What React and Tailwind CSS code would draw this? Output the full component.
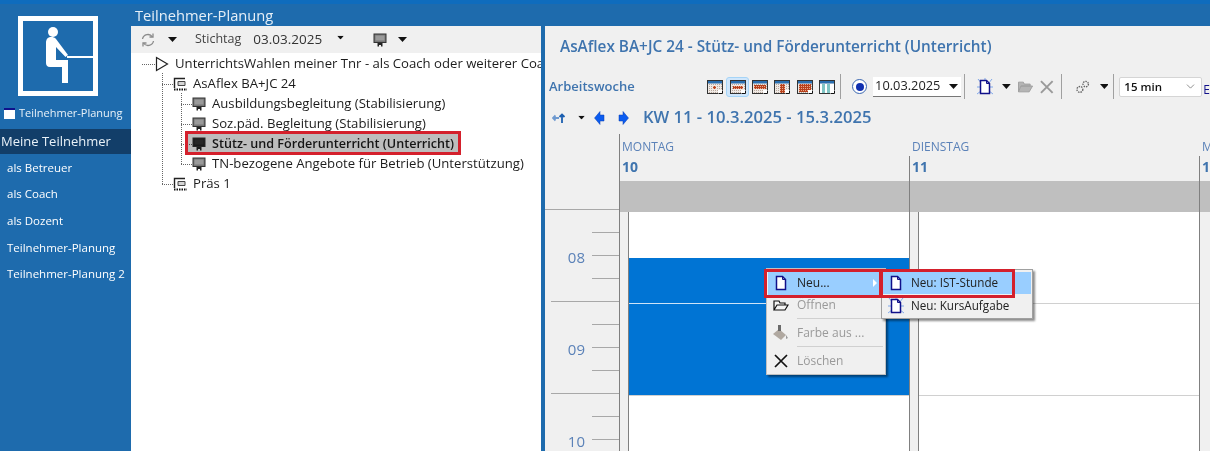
import React from 'react';
import { ChevronDown } from 'lucide-react';

const navItems = ['als Betreuer', 'als Coach', 'als Dozent', 'Teilnehmer-Planung', 'Teilnehmer-Planung 2'];

const Caret = ({ className = '' }) => (
  <svg width="9" height="5" viewBox="0 0 9 5" className={className}><path d="M0 0h9L4.5 5z" fill="#111" /></svg>
);

const Screen = ({ dark }) => (
  <svg width="14" height="14" viewBox="0 0 14 14" className="shrink-0">
    <rect x="1" y="1" width="12" height="8.5" fill={dark ? '#222' : '#777'} stroke="#333" />
    <rect x="2.5" y="2.5" width="9" height="5" fill={dark ? '#333' : '#9a9a9a'} />
    <path d="M4.5 10h5v3.5H8V12H6v1.5H4.5z" fill="#222" />
  </svg>
);

const Project = () => (
  <svg width="14" height="14" viewBox="0 0 14 14" className="shrink-0">
    <path d="M1.5 11V1.5H12" fill="none" stroke="#222" strokeWidth="1.4" />
    <path d="M5 4.5h7v4H5z" fill="#d5d5d5" stroke="#444" />
    <path d="M1 12.5h13" stroke="#111" strokeWidth="2" strokeDasharray="1.5 1" />
  </svg>
);

const TreeRow = ({ indent, dots, icon, children }) => (
  <div className="flex items-center h-5" style={{ paddingLeft: indent }}>
    <div className="border-t border-dotted border-[#666] h-0 shrink-0" style={{ width: dots }} />
    {icon}
    <span className="ml-[6px] whitespace-nowrap">{children}</span>
  </div>
);

// red blocks inside the little calendar view icons
const blocks = {
  a: [[6, 6, 3, 3]],
  b: [[3, 6, 10, 3]],
  c: [[2, 5, 12, 4]],
  d: [[6, 4, 5, 9]],
  e: [[2, 4, 12, 8]],
};

const ViewIcon = ({ kind, active }) => (
  <span className={`flex items-center justify-center w-[23px] h-[20px] rounded-[3px] ${active ? 'bg-[#cfe6fb] border border-[#a5d4f7]' : ''}`}>
    <svg width="16" height="14" viewBox="0 0 16 14">
      <defs>
        <pattern id={`dots-${kind}`} width="2" height="2" patternUnits="userSpaceOnUse">
          <rect width="2" height="2" fill="#efe9e4" />
          <rect width="1" height="1" fill="#b8a79c" />
        </pattern>
        <pattern id={`red-${kind}`} width="2" height="2" patternUnits="userSpaceOnUse">
          <rect width="2" height="2" fill="#b8411c" />
          <rect width="1" height="1" fill="#e8a98e" />
        </pattern>
      </defs>
      <rect x="0.5" y="0.5" width="15" height="13" fill={`url(#dots-${kind})`} stroke="#333" />
      <rect x="1" y="1" width="14" height="2.5" fill="#2a6fb0" />
      {kind === 'f' ? (
        <>
          <rect x="1" y="4" width="14" height="9" fill="#fff" />
          <rect x="3" y="4" width="3" height="9" fill="#7fc4c4" />
          <rect x="8" y="4" width="3" height="9" fill="#7fc4c4" />
        </>
      ) : (
        blocks[kind].map((r, i) => <rect key={i} x={r[0]} y={r[1]} width={r[2]} height={r[3]} fill={`url(#red-${kind})`} />)
      )}
      <rect x="11" y="10" width="5" height="4" fill="#fff" />
      <path d="M11.5 13.5h4v-3" fill="none" stroke="#111" />
    </svg>
  </span>
);

const Sep = () => <div className="w-px h-[25px] bg-[#a0a0a0] shrink-0" />;

const DocIcon = ({ star }) => (
  <svg width="16" height="18" viewBox="0 0 16 18" className="shrink-0">
    {star && <path d="M1 1l4 5M15 1l-4 5M0 16l4-3M16 16l-4-3M8 0v2M0 9h3M16 9h-3" stroke="#7fa8ea" strokeWidth="1" />}
    <path d="M3.5 2.5h6l3 3v10h-9z" fill="#fff" stroke="#10108a" strokeWidth="1.5" />
    <path d="M9.5 2.5v3h3" fill="none" stroke="#10108a" />
  </svg>
);

const Diamond = ({ dir }) => (
  <svg width="11" height="14" viewBox="0 0 11 14">
    {dir === 'l'
      ? <path d="M6 0.5L0.5 7 6 13.5V10h4V4H6z" fill="#0b5cf0" stroke="#0a3fb0" strokeWidth="0.5" />
      : <path d="M5 0.5L10.5 7 5 13.5V10H1V4h4z" fill="#0b5cf0" stroke="#0a3fb0" strokeWidth="0.5" />}
  </svg>
);

const ticks = Array.from({ length: 10 }, (_, i) => i);
const labels = { 1: '08', 5: '09', 9: '10' };

const DayColumn = () => (
  <div className="flex w-[290px] shrink-0 border-l border-[#808080] bg-[#f0f0f0]">
    <div className="w-[8px] shrink-0" />
    <div className="flex-1 bg-white border-l border-[#808080]">
      <div className="h-[92px] border-b border-[#d0d0d0]" />
      <div className="h-[92px] border-b border-[#d0d0d0]" />
    </div>
  </div>
);

const App = () => {
  return (
    <div className="relative w-[1210px] h-[451px] overflow-hidden flex bg-[#1e6bad] text-[13.15px] text-[#1c1c1c] font-['Open_Sans','Noto_Sans',sans-serif]">
      {/* Sidebar */}
      <aside className="w-[131px] shrink-0 text-white flex flex-col">
        <div className="mt-[16px] ml-[18px] w-[80px] h-[80px] border-[5px] border-white">
          <svg width="70" height="70" viewBox="0 0 70 70">
            <circle cx="30" cy="11" r="5" fill="#fff" />
            <path d="M23 22c0-4 2-6 5-6 2 0 4 .5 5 2l12 16-2.500 2L33 26v13h12v23h-6V46H27c-3 0-4-2-4-4z" fill="#fff" />
            <rect x="44" y="35" width="26" height="2" fill="#fff" />
          </svg>
        </div>
        <div className="flex items-center mt-[9px] ml-[4px] text-[11px] leading-[16px] font-medium text-[#e8f1f8] whitespace-nowrap">
          <span className="w-[11px] h-[11px] bg-white border-t-2 border-[#10108a] mr-[4px] shrink-0" />
          Teilnehmer-Planung
        </div>
        <div className="mt-[8px] h-[25px] bg-[#123e69] pl-[1px] flex items-center text-[13px] text-[#e8f1f8]">Meine Teilnehmer</div>
        <nav className="flex flex-col">
          {navItems.map((item) => (
            <div key={item} className="h-[26.7px] pl-[7px] flex items-center text-[11.5px] font-medium whitespace-nowrap">{item}</div>
          ))}
        </nav>
      </aside>

      {/* Main */}
      <div className="flex-1 min-w-0 flex flex-col">
        <div className="h-[26px] pt-[1px] pl-[4px] text-[14.7px] leading-[20px] font-medium text-[#e6eff7] border-t-[4px] border-[#0f6cbd] -ml-[131px] indent-[131px]">Teilnehmer-Planung</div>
        <div className="flex-1 min-h-0 flex">
          {/* Tree panel */}
          <section className="w-[410px] shrink-0 bg-white overflow-hidden relative font-medium">
            <div className="h-[27px] bg-[#f0f0f0] flex items-center text-[12.5px] font-normal text-[#444]">
              <svg width="16" height="16" viewBox="0 0 16 16" className="ml-[9px]" fill="none" stroke="#8a8a8a" strokeWidth="1.3">
                <path d="M2.5 7a5.5 5.5 0 0 1 10-2M13.500 9a5.500 5.500 0 0 1-10 2" />
                <path d="M13 1.500V5H9.500M3 14.500V11h3.500" />
              </svg>
              <Caret className="ml-[12px]" />
              <span className="ml-[18px]">Stichtag</span>
              <span className="ml-[12px] text-[13.5px] text-[#333]">03.03.2025</span>
              <Caret className="ml-[14px] scale-75 -translate-y-[2px]" />
              <span className="ml-[28px]"><Screen /></span>
              <Caret className="ml-[11px]" />
            </div>
            <div className="pt-[1px] relative">
              <div className="absolute left-[31px] top-[20px] h-[111px] border-l border-dotted border-[#666]" />
              <div className="absolute left-[50px] top-[40px] h-[71px] border-l border-dotted border-[#666]" />
              <div className="whitespace-nowrap">
                <TreeRow indent={11} dots={13} icon={
                  <svg width="14" height="16" viewBox="0 0 14 16" className="shrink-0"><path d="M1.500 1.500v13l11-6.500z" fill="#fff" stroke="#222" strokeWidth="1.2" /></svg>
                }>UnterrichtsWahlen meiner Tnr - als Coach oder weiterer Coach</TreeRow>
                <TreeRow indent={31} dots={11} icon={<Project />}>AsAflex BA+JC 24</TreeRow>
                <TreeRow indent={50} dots={11} icon={<Screen />}>Ausbildungsbegleitung (Stabilisierung)</TreeRow>
                <TreeRow indent={50} dots={11} icon={<Screen />}>Soz.päd. Begleitung (Stabilisierung)</TreeRow>
                <TreeRow indent={50} dots={11} icon={<Screen dark />}><b className="font-semibold text-[12.6px]">Stütz- und Förderunterricht (Unterricht)</b></TreeRow>
                <TreeRow indent={50} dots={11} icon={<Screen />}>TN-bezogene Angebote für Betrieb (Unterstützung)</TreeRow>
                <TreeRow indent={31} dots={11} icon={<Project />}>Präs 1</TreeRow>
              </div>
              {/* selection over row 5 */}
              <div className="absolute left-[54px] top-[78px] w-[276px] h-[24px] border-[3px] border-[#d4202c] pointer-events-none" />
              <div className="absolute left-[57px] top-[81px] w-[270px] h-[18px] bg-[#bdbdbd] mix-blend-multiply pointer-events-none" />
            </div>
          </section>

          {/* Calendar panel */}
          <section className="flex-1 min-w-0 ml-[4px] bg-[#f0f0f0] flex flex-col overflow-hidden">
            <h2 className="h-[40px] pl-[15px] pt-[8px] text-[15.35px] leading-[24px] font-semibold text-[#3f74ae] whitespace-nowrap">AsAflex BA+JC 24 - Stütz- und Förderunterricht (Unterricht)</h2>
            <div className="h-[25px] mt-[8px] flex items-center">
              <span className="ml-[4px] w-[155px] text-[13px] font-semibold text-[#3f74ae] shrink-0">Arbeitswoche</span>
              <ViewIcon kind="a" />
              <ViewIcon kind="b" active />
              <ViewIcon kind="c" />
              <ViewIcon kind="d" />
              <ViewIcon kind="e" />
              <ViewIcon kind="f" />
              <span className="ml-[2px]"><Sep /></span>
              <span className="ml-[11px] w-[15px] h-[15px] rounded-full border border-[#3a66b0] bg-white flex items-center justify-center shrink-0"><span className="w-[8px] h-[8px] rounded-full bg-[#1030b0]" /></span>
              <div className="ml-[6px] w-[88px] h-[20px] bg-white border-b border-[#777] flex items-center shrink-0 text-[12.8px] text-[#222]">
                <span className="pl-[2px] flex-1">10.03.2025</span>
                <Caret className="mr-[3px]" />
              </div>
              <span className="ml-[3px]"><Sep /></span>
              <span className="ml-[12px]"><DocIcon star /></span>
              <Caret className="ml-[9px]" />
              <svg width="16" height="12" viewBox="0 0 16 12" className="ml-[7px]"><path d="M0.500 11V1h5l1 2h6v2H3L0.500 11h11L15 5H3" fill="#b5b5b5" stroke="#a0a0a0" /></svg>
              <svg width="14" height="14" viewBox="0 0 14 14" className="ml-[7px]"><path d="M1 1l12 12M13 1L1 13" stroke="#9a9a9a" strokeWidth="2" /></svg>
              <span className="ml-[7px]"><Sep /></span>
              <svg width="14" height="14" viewBox="0 0 14 14" className="ml-[14px]" fill="#f0f0f0" stroke="#666" strokeWidth="1.4"><circle cx="4" cy="9.500" r="3" strokeDasharray="1.500 1" /><circle cx="10" cy="4" r="2.800" strokeDasharray="1.500 1" /></svg>
              <Caret className="ml-[10px]" />
              <span className="ml-[5px]"><Sep /></span>
              <div className="ml-[5px] w-[83px] h-[20px] bg-white border border-[#d5d5d5] rounded-[2px] flex items-center justify-between px-[4px] text-[11.5px] font-semibold text-[#111] shrink-0">
                15 min
                <ChevronDown size={13} strokeWidth={1.2} color="#555" />
              </div>
              <span className="ml-[1px] mt-[7px] text-[12px] text-[#10108a]">E</span>
            </div>
            <div className="h-[29px] mt-[4px] flex items-center">
              <svg width="14" height="12" viewBox="0 0 14 12" className="ml-[7px]" fill="none" stroke="#1c5fb0" strokeWidth="1.8"><path d="M1 6h6M3.500 3.500L1 6l2.500 2.500" stroke="#6f9ad0" /><path d="M10 11V3M7.500 5L10 2.500 12.500 5" /></svg>
              <Caret className="ml-[11px] scale-75" />
              <span className="ml-[8px]"><Diamond dir="l" /></span>
              <span className="ml-[13px]"><Diamond dir="r" /></span>
              <span className="ml-[14px] text-[16.6px] font-semibold text-[#3f74ae] whitespace-nowrap">KW 11 - 10.3.2025 - 15.3.2025</span>
            </div>
            <div className="flex-1 min-h-0 flex mt-[2px]">
              {/* Time column */}
              <div className="w-[74px] shrink-0 flex flex-col">
                <div className="h-[78px] border-b border-[#a8a8a8]" />
                <div className="pt-[11px]">
                  {ticks.map((t) => (
                    <div key={t} className="h-[23px] flex items-center justify-end">
                      {labels[t] && <span className="mr-[7px] mt-[4px] text-[15px] leading-none text-[#5b82b8]">{labels[t]}</span>}
                      <div className={`h-px bg-[#a8a8a8] ${t === 3 || t === 7 ? 'w-[68px]' : 'w-[27px]'}`} />
                    </div>
                  ))}
                </div>
              </div>
              {/* Days */}
              <div className="flex-1 min-w-0 flex flex-col">
                <div className="h-[47px] flex shrink-0 relative">
                  <div className="w-[290px] shrink-0 border-l border-[#808080] pl-[2px]">
                    <div className="h-[22px] text-[12px] leading-[26px] text-[#5b82b8]">MONTAG</div>
                    <div className="text-[14px] leading-[22px] font-bold text-[#3f74ae]">10</div>
                  </div>
                  <div className="w-[290px] shrink-0 pl-[3px]">
                    <div className="h-[22px] text-[12px] leading-[26px] text-[#5b82b8]">DIENSTAG</div>
                    <div className="-ml-[3px] pl-[2px] h-[25px] border-l border-[#808080] text-[14px] leading-[22px] font-bold text-[#3f74ae]">11</div>
                  </div>
                  <div className="w-[20px] shrink-0 pl-[3px]">
                    <div className="h-[22px] text-[12px] leading-[26px] text-[#5b82b8]">M</div>
                    <div className="-ml-[3px] pl-[2px] h-[25px] border-l border-[#808080] text-[14px] leading-[22px] font-bold text-[#3f74ae]">1</div>
                  </div>
                </div>
                <div className="h-[31px] bg-[#bfbfbf] flex shrink-0">
                  <div className="w-[290px] shrink-0 border-l border-[#808080]" />
                  <div className="w-[290px] shrink-0 border-l border-[#808080]" />
                  <div className="flex-1 border-l border-[#808080]" />
                </div>
                <div className="flex-1 min-h-0 flex">
                  <DayColumn />
                  <DayColumn />
                  <div className="flex-1 border-l border-[#808080]" />
                </div>
              </div>
            </div>
          </section>
        </div>
      </div>

      {/* Event, drawn over the day column */}
      <div className="absolute left-[629px] top-[258px] w-[280px] h-[137px] bg-[#0074d4]">
        <div className="mt-[45px] h-px bg-[#cfe4f7]" />
      </div>

      {/* Context menu */}
      <div className="absolute left-[766px] top-[268px] w-[120px] h-[107px] bg-[#f0f0f0] border border-[#c0c0c0] shadow-[2px_2px_2px_rgba(0,0,0,0.45)] text-[12px] text-[#9a9a9a]">
        <div className="h-[24px] mt-[2px] mx-[1px] bg-[#99ceff] flex items-center text-[#222] relative">
          <span className="ml-[5px]"><DocIcon /></span>
          <span className="ml-[8px]">Neu...</span>
          <svg width="4" height="8" viewBox="0 0 4 8" className="absolute right-[7px] top-[8px]"><path d="M0 0l4 4-4 4z" fill="#fff" /></svg>
        </div>
        <div className="h-[20px] flex items-center">
          <svg width="16" height="12" viewBox="0 0 16 12" className="ml-[6px]" fill="#f5f5f5" stroke="#111" strokeWidth="1.2"><path d="M1 11V2h5l1 2h5v2M1 11l3-5h11l-3 5z" /></svg>
          <span className="ml-[8px]">Öffnen</span>
        </div>
        <div className="h-px bg-[#d0d0d0] ml-[30px] mr-[2px] mt-[3px]" />
        <div className="h-[27px] flex items-center">
          <svg width="17" height="17" viewBox="0 0 17 17" className="ml-[5px]"><path d="M1 10l6-5 7 6-5 5z" fill="#b0a8a0" /><path d="M6 1h3v6H6z" fill="#6a6a6a" /><path d="M14 11l2 3-2 1z" fill="#999" /></svg>
          <span className="ml-[8px]">Farbe aus ...</span>
        </div>
        <div className="h-px bg-[#d0d0d0] ml-[30px] mr-[2px]" />
        <div className="h-[27px] flex items-center">
          <svg width="14" height="14" viewBox="0 0 14 14" className="ml-[7px]"><path d="M1 1l12 12M13 1L1 13" stroke="#111" strokeWidth="1.700" /></svg>
          <span className="ml-[9px]">Löschen</span>
        </div>
      </div>

      {/* Submenu */}
      <div className="absolute left-[881px] top-[269px] w-[152px] h-[50px] bg-[#f0f0f0] border border-[#a0a0a0] shadow-[2px_2px_2px_rgba(0,0,0,0.45)] text-[11.7px] text-[#222]">
        <div className="h-[22px] mt-[2px] mx-[1px] bg-[#99ceff] flex items-center">
          <span className="ml-[5px]"><DocIcon /></span>
          <span className="ml-[7px]">Neu: IST-Stunde</span>
        </div>
        <div className="h-[22px] mt-[1px] flex items-center">
          <span className="ml-[6px]"><DocIcon star /></span>
          <span className="ml-[7px]">Neu: KursAufgabe</span>
        </div>
      </div>

      {/* Red annotation frames */}
      <div className="absolute left-[764px] top-[269px] w-[118px] h-[29px] border-[3px] border-[#d4202c]" />
      <div className="absolute left-[880px] top-[269px] w-[135px] h-[29px] border-[3px] border-[#d4202c]" />
    </div>
  );
};

export default App;
